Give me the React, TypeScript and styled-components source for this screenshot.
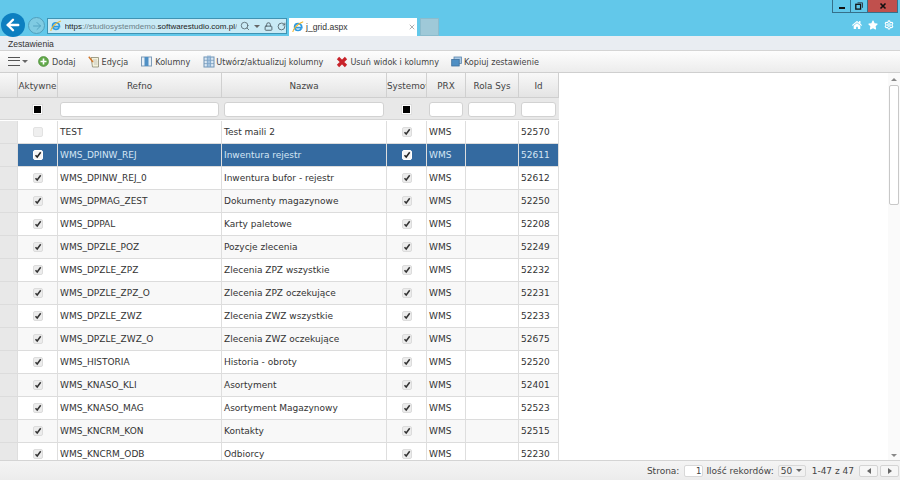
import React from "react";
import styled, { createGlobalStyle } from "styled-components";
import { Settings, Search, Lock, RotateCw, X, ArrowLeft, ArrowRight } from "lucide-react";
import { FaHome, FaStar } from "react-icons/fa";

const GlobalStyle = createGlobalStyle`
  html, body { margin: 0; padding: 0; height: 100%; overflow: hidden; background: #fff; }
  * { box-sizing: border-box; }
  body { font-family: "DejaVu Sans", Verdana, sans-serif; font-size: 9px; color: #333; }
`;

const Page = styled.div`
  display: flex;
  flex-direction: column;
  width: 900px;
  height: 480px;
`;

const Chrome = styled.div`
  height: 36px;
  flex-shrink: 0;
  background: #62c8ea;
  display: flex;
  flex-direction: column;
`;

const WindowButtons = styled.div`
  height: 13px;
  display: flex;
  justify-content: flex-end;
  padding-right: 2px;
`;

const WinButton = styled.div<{ $w: number; $close?: boolean }>`
  width: ${(p) => p.$w}px;
  height: 13px;
  display: flex;
  align-items: center;
  justify-content: center;
  background: ${(p) => (p.$close ? "#c0504d" : "transparent")};
  border: 1px solid #35708a;
  border-top: none;
  border-left-width: ${(p) => (p.$w === 19 ? 1 : 0)}px;
`;

const NavRow = styled.div`
  display: flex;
  align-items: flex-start;
  padding-left: 1px;
  position: relative;
  height: 23px;
`;

const BackButton = styled.div`
  width: 24px;
  height: 24px;
  border-radius: 50%;
  background: #0d7fc0;
  display: flex;
  align-items: center;
  justify-content: center;
  flex-shrink: 0;
`;

const ForwardButton = styled.div`
  width: 17px;
  height: 17px;
  border-radius: 50%;
  margin: 4px 0 0 3px;
  background: #7fcbe2;
  border: 1px solid #4f9fbd;
  display: flex;
  align-items: center;
  justify-content: center;
  flex-shrink: 0;
`;

const AddressBar = styled.div`
  width: 240px;
  height: 16px;
  margin: 5px 0 0 2px;
  background: #c9eaf5;
  border: 1px solid #3f93b3;
  display: flex;
  align-items: center;
  padding-left: 2px;
  gap: 3px;
  font-family: "Liberation Sans", sans-serif;
  font-size: 8px;
  white-space: nowrap;
`;

const UrlText = styled.span`
  width: 178px;
  overflow: hidden;
  color: #6b7f88;
  b { font-weight: 400; color: #222; }
`;

const AddressIcons = styled.span`
  display: flex;
  align-items: center;
  gap: 4px;
  color: #55666e;
`;

const Caret = styled.span`
  width: 0;
  height: 0;
  border-left: 3px solid transparent;
  border-right: 3px solid transparent;
  border-top: 3px solid #666;
`;

const Tab = styled.div`
  width: 128px;
  height: 18px;
  margin: 5px 0 0 2px;
  background: #fff;
  display: flex;
  align-items: center;
  padding: 0 1px 0 3px;
  gap: 2px;
  font-family: "Liberation Sans", sans-serif;
  font-size: 8.6px;
  color: #333;
`;

const TabTitle = styled.span`
  flex: 1;
`;

const NewTab = styled.div`
  width: 19px;
  height: 18px;
  margin: 5px 0 0 3px;
  background: #9fc9d8;
  border: 1px solid #8bbccd;
`;

const ChromeTools = styled.div`
  margin-left: auto;
  display: flex;
  gap: 6px;
  padding: 7px 6px 0 0;
  color: #fff;
`;

const MenuBar = styled.div`
  height: 14px;
  flex-shrink: 0;
  background: #e9edf2;
  padding-left: 8px;
  line-height: 17px;
  font-family: "Liberation Sans", sans-serif;
  font-size: 8.6px;
  color: #333;
`;

const Toolbar = styled.div`
  height: 23px;
  flex-shrink: 0;
  display: flex;
  align-items: center;
  padding-left: 8px;
  font-size: 8.1px;
  background: linear-gradient(#fdfdfd, #ececec);
  border-top: 1px solid #d4d4d4;
  border-bottom: 1px solid #cfcfcf;
`;

const Hamburger = styled.div`
  width: 12px;
  height: 9px;
  border-top: 1.5px solid #555;
  border-bottom: 1.5px solid #555;
  position: relative;
  margin-right: 2px;
  &::after {
    content: "";
    position: absolute;
    left: 0;
    right: 0;
    top: 2.25px;
    border-top: 1.5px solid #555;
  }
`;

const ToolButton = styled.div<{ $left: number; $gap?: number }>`
  display: flex;
  align-items: center;
  gap: ${(p) => p.$gap ?? 3}px;
  margin-left: ${(p) => p.$left}px;
  color: #444;
  white-space: nowrap;
`;

const Body = styled.div`
  flex: 1;
  min-height: 0;
  display: flex;
  overflow: hidden;
`;

const GridArea = styled.div`
  flex: 1;
  min-width: 0;
  overflow: hidden;
`;

const Grid = styled.div`
  width: 559px;
  display: grid;
  grid-template-columns: 18px 40px 164px 165px 40px 39px 53px 40px;
  grid-auto-rows: 23px;
`;

const HeadCell = styled.div`
  height: 25px;
  padding-top: 1px;
  display: flex;
  align-items: center;
  justify-content: safe center;
  overflow: hidden;
  white-space: nowrap;
  font-size: 8.8px;
  background: linear-gradient(#f8f8f8, #e4e4e4);
  border-right: 1px solid #d0d0d0;
  border-bottom: 1px solid #cfcfcf;
  color: #444;
`;

const FilterCell = styled.div`
  height: 22px;
  margin-top: 2px;
  padding: 1px 3px 0 2px;
  display: flex;
  align-items: center;
  justify-content: center;
  background: #e8e8e8;
  border-bottom: 1px solid #d6d6d6;
`;

const FilterInput = styled.div`
  width: 100%;
  height: 15px;
  background: #fff;
  border: 1px solid #d2d2d2;
  border-radius: 3px;
`;

const Indeterminate = styled.div`
  width: 9px;
  height: 9px;
  background: #000;
  border: 1px solid #fff;
  outline: 1px solid #ddd;
`;

const Cell = styled.div<{ $selected: boolean; $alt: boolean; $center?: boolean; $gutter?: boolean }>`
  display: flex;
  align-items: center;
  justify-content: ${(p) => (p.$center ? "center" : "flex-start")};
  padding-left: ${(p) => (p.$center ? 0 : 2)}px;
  margin-top: 2px;
  margin-bottom: -2px;
  white-space: nowrap;
  overflow: hidden;
  border-bottom: 1px solid #dcdcdc;
  border-right: 1px solid #dedede;
  color: ${(p) => (p.$selected ? "#d5e6f5" : "#333")};
  background: ${(p) =>
    p.$gutter ? "#e8e8e8" : p.$selected ? "#346aa0" : p.$alt ? "#f8f8f8" : "#fff"};
`;

const CheckBox = styled.div<{ $selected: boolean; $checked: boolean }>`
  width: 10px;
  height: 10px;
  border-radius: 2px;
  display: flex;
  align-items: center;
  justify-content: center;
  background: ${(p) => (p.$selected ? "#f4f4f4" : "#ececec")};
  border: 1px solid ${(p) => (p.$selected ? "#fff" : "#dcdcdc")};
  opacity: ${(p) => (p.$checked ? 1 : 0.8)};
`;

const ScrollBar = styled.div`
  width: 12px;
  flex-shrink: 0;
  background: #fafafa;
  display: flex;
  flex-direction: column;
  align-items: center;
  justify-content: space-between;
  padding: 5px 0 3px;
  position: relative;
`;

const ScrollArrow = styled.span<{ $up?: boolean }>`
  width: 0;
  height: 0;
  border-left: 3px solid transparent;
  border-right: 3px solid transparent;
  ${(p) => (p.$up ? "border-bottom: 3px solid #888;" : "border-top: 3px solid #888;")}
`;

const ScrollThumb = styled.div`
  position: absolute;
  top: 12px;
  left: 1px;
  width: 10px;
  height: 120px;
  background: #fff;
  border: 1px solid #c8c8c8;
  border-radius: 2px;
`;

const Footer = styled.div`
  height: 20px;
  flex-shrink: 0;
  display: flex;
  align-items: center;
  justify-content: flex-end;
  padding-right: 1px;
  background: linear-gradient(#f4f4f4, #ececec);
  border-top: 1px solid #d4d4d4;
  color: #444;
`;

const PageInput = styled.div`
  width: 19px;
  height: 12px;
  margin: 0 3px 0 5px;
  background: #fff;
  border: 1px solid #d8d8d8;
  border-radius: 2px;
  text-align: right;
  padding-right: 1px;
  line-height: 11px;
  font-size: 8.5px;
`;

const PageSelect = styled.div`
  width: 28px;
  height: 12px;
  margin: 0 6px 0 4px;
  display: flex;
  align-items: center;
  justify-content: space-between;
  padding: 0 3px 0 2px;
  background: #f1f1f1;
  border: 1px solid #d8d8d8;
  border-radius: 2px;
`;

const PageButton = styled.div<{ $first?: boolean }>`
  width: 19px;
  height: 12px;
  margin-left: ${(p) => (p.$first ? 5 : 2)}px;
  background: #f6f6f6;
  border: 1px solid #d4d4d4;
  border-radius: 2px;
  display: flex;
  align-items: center;
  justify-content: center;
`;

const PageArrow = styled.span<{ $left?: boolean }>`
  width: 0;
  height: 0;
  border-top: 3px solid transparent;
  border-bottom: 3px solid transparent;
  ${(p) => (p.$left ? "border-right: 4px solid #666;" : "border-left: 4px solid #666;")}
`;

const columns = ["", "Aktywne", "Refno", "Nazwa", "Systemowy", "PRX", "Rola Sys", "Id"];

const rows: [string, string, string][] = [
  ["TEST", "Test maili 2", "52570"],
  ["WMS_DPINW_REJ", "Inwentura rejestr", "52611"],
  ["WMS_DPINW_REJ_0", "Inwentura bufor - rejestr", "52612"],
  ["WMS_DPMAG_ZEST", "Dokumenty magazynowe", "52250"],
  ["WMS_DPPAL", "Karty paletowe", "52208"],
  ["WMS_DPZLE_POZ", "Pozycje zlecenia", "52249"],
  ["WMS_DPZLE_ZPZ", "Zlecenia ZPZ wszystkie", "52232"],
  ["WMS_DPZLE_ZPZ_O", "Zlecenia ZPZ oczekujące", "52231"],
  ["WMS_DPZLE_ZWZ", "Zlecenia ZWZ wszystkie", "52233"],
  ["WMS_DPZLE_ZWZ_O", "Zlecenia ZWZ oczekujące", "52675"],
  ["WMS_HISTORIA", "Historia - obroty", "52520"],
  ["WMS_KNASO_KLI", "Asortyment", "52401"],
  ["WMS_KNASO_MAG", "Asortyment Magazynowy", "52523"],
  ["WMS_KNCRM_KON", "Kontakty", "52515"],
  ["WMS_KNCRM_ODB", "Odbiorcy", "52230"],
];

function IeLogo() {
  return (
    <svg width="12" height="12" viewBox="0 0 12 12">
      <path d="M2.6 6.6h7.2C9.8 4 8.2 2.6 6.1 2.6 4 2.6 2.6 4.2 2.6 6.1c0 2.1 1.5 3.4 3.5 3.4 1.5 0 2.7-.7 3.3-1.9" fill="none" stroke="#2f9be0" strokeWidth="1.7" />
      <path d="M.8 11c.3-3 5-8.6 10.4-10.2" fill="none" stroke="#f0b429" strokeWidth="1.1" />
    </svg>
  );
}

function Tick({ selected }: { selected: boolean }) {
  return (
    <svg width="8" height="8" viewBox="0 0 8 8">
      <path d="M1.5 4.2 3.2 6 6.7 1.2" fill="none" stroke={selected ? "#222" : "#333"} strokeWidth="1.5" />
    </svg>
  );
}

function Check({ checked, selected }: { checked: boolean; selected: boolean }) {
  return (
    <CheckBox $checked={checked} $selected={selected}>
      {checked && <Tick selected={selected} />}
    </CheckBox>
  );
}

function ToolIcon({ kind }: { kind: string }) {
  if (kind === "add") {
    return (
      <svg width="11" height="11" viewBox="0 0 11 11">
        <circle cx="5.5" cy="5.5" r="5" fill="#62a84a" stroke="#4a8a38" strokeWidth=".6" />
        <path d="M5.5 2.5v6M2.5 5.5h6" stroke="#fff" strokeWidth="1.6" />
      </svg>
    );
  }
  if (kind === "edit") {
    return (
      <svg width="12" height="12" viewBox="0 0 12 12">
        <path d="M3 1.5h7.5v9.5H4.5z" fill="#f4f2dc" stroke="#8a8a72" strokeWidth=".8" />
        <path d="M5 4h4M5.5 6h4M6 8h3.5" stroke="#aaa" strokeWidth=".6" />
        <path d="M.8 .8 5 6" stroke="#d2762a" strokeWidth="1.4" />
      </svg>
    );
  }
  if (kind === "columns") {
    return (
      <svg width="11" height="11" viewBox="0 0 11 11">
        <rect x=".5" y="1" width="10" height="9" fill="#e8f0f8" stroke="#7e9cb8" />
        <rect x="3.5" y="1" width="4" height="9" fill="#4f8fc4" />
      </svg>
    );
  }
  if (kind === "create") {
    return (
      <svg width="12" height="13" viewBox="0 0 12 13">
        <rect x="1" y="2" width="10" height="10" fill="#dce9f5" stroke="#6f93b5" />
        <path d="M4.3 2v10M7.6 2v10M1 5.3h10M1 8.6h10" stroke="#6f93b5" strokeWidth=".7" />
        <rect x="4" y=".5" width="4" height="11.5" fill="#7fa9cf" fillOpacity=".6" />
      </svg>
    );
  }
  if (kind === "delete") {
    return (
      <svg width="12" height="12" viewBox="0 0 12 12">
        <path d="M2 2 10 10M10 2 2 10" stroke="#c8232a" strokeWidth="3.2" />
      </svg>
    );
  }
  return (
    <svg width="11" height="11" viewBox="0 0 11 11">
      <rect x="3" y="1" width="7.5" height="6.5" fill="#a9c8e4" stroke="#5b86ad" strokeWidth=".8" />
      <rect x=".7" y="3.5" width="7.5" height="6.5" fill="#4f8fc4" stroke="#3d6f9c" strokeWidth=".8" />
    </svg>
  );
}

export default function App() {
  return (
    <Page>
      <GlobalStyle />
      <Chrome>
        <WindowButtons>
          <WinButton $w={19}>
            <svg width="8" height="8" viewBox="0 0 8 8"><rect x="1" y="5" width="6" height="2" fill="#111" /></svg>
          </WinButton>
          <WinButton $w={17}>
            <svg width="8" height="8" viewBox="0 0 8 8">
              <path d="M2.5 .8h5v5" fill="none" stroke="#345" />
              <rect x=".8" y="2.3" width="4.8" height="4.8" fill="none" stroke="#111" strokeWidth="1.3" />
            </svg>
          </WinButton>
          <WinButton $w={30} $close>
            <svg width="8" height="8" viewBox="0 0 8 8"><path d="M1.5 1.5 6.5 6.5M6.5 1.5 1.5 6.5" stroke="#111" strokeWidth="1.6" /></svg>
          </WinButton>
        </WindowButtons>
        <NavRow>
          <BackButton><ArrowLeft size={18} color="#fff" strokeWidth={3.2} /></BackButton>
          <ForwardButton><ArrowRight size={12} color="#4f9fbd" strokeWidth={1.8} /></ForwardButton>
          <AddressBar>
            <IeLogo />
            <UrlText><b>https</b>://studiosystemdemo.<b>softwarestudio.com.pl</b>/</UrlText>
            <AddressIcons>
              <Search size={10} strokeWidth={2} />
              <Caret />
              <Lock size={9} strokeWidth={2.6} />
              <RotateCw size={9} strokeWidth={2.4} />
            </AddressIcons>
          </AddressBar>
          <Tab>
            <IeLogo />
            <TabTitle>j_grid.aspx</TabTitle>
            <X size={8} color="#999" strokeWidth={2.4} />
          </Tab>
          <NewTab />
          <ChromeTools>
            <FaHome size={10} />
            <FaStar size={10} />
            <Settings size={10} strokeWidth={2.6} />
          </ChromeTools>
        </NavRow>
      </Chrome>
      <MenuBar>Zestawienia</MenuBar>
      <Toolbar>
        <Hamburger />
        <Caret />
        <ToolButton $left={10}><ToolIcon kind="add" />Dodaj</ToolButton>
        <ToolButton $left={12} $gap={2}><ToolIcon kind="edit" />Edycja</ToolButton>
        <ToolButton $left={13}><ToolIcon kind="columns" />Kolumny</ToolButton>
        <ToolButton $left={13} $gap={1}><ToolIcon kind="create" />Utwórz/aktualizuj kolumny</ToolButton>
        <ToolButton $left={13} $gap={2}><ToolIcon kind="delete" />Usuń widok i kolumny</ToolButton>
        <ToolButton $left={12} $gap={2}><ToolIcon kind="copy" />Kopiuj zestawienie</ToolButton>
      </Toolbar>
      <Body>
        <GridArea>
          <Grid>
            {columns.map((c, i) => (
              <HeadCell key={i}>{c}</HeadCell>
            ))}
            {columns.map((c, i) => (
              <FilterCell key={i}>
                {(i === 1 || i === 4) && <Indeterminate />}
                {(i === 2 || i === 3 || i > 4) && <FilterInput />}
              </FilterCell>
            ))}
            {rows.map(([refno, name, id], i) => {
              const selected = i === 1;
              const alt = i % 2 === 1;
              const props = { $selected: selected, $alt: alt };
              return (
                <React.Fragment key={refno}>
                  <Cell {...props} $gutter />
                  <Cell {...props} $center><Check checked={i !== 0} selected={selected} /></Cell>
                  <Cell {...props}>{refno}</Cell>
                  <Cell {...props}>{name}</Cell>
                  <Cell {...props} $center><Check checked selected={selected} /></Cell>
                  <Cell {...props}>WMS</Cell>
                  <Cell {...props} />
                  <Cell {...props}>{id}</Cell>
                </React.Fragment>
              );
            })}
          </Grid>
        </GridArea>
        <ScrollBar>
          <ScrollArrow $up />
          <ScrollThumb />
          <ScrollArrow />
        </ScrollBar>
      </Body>
      <Footer>
        Strona:
        <PageInput>1</PageInput>
        Ilość rekordów:
        <PageSelect>50<Caret /></PageSelect>
        1-47 z 47
        <PageButton $first><PageArrow $left /></PageButton>
        <PageButton><PageArrow /></PageButton>
      </Footer>
    </Page>
  );
}
